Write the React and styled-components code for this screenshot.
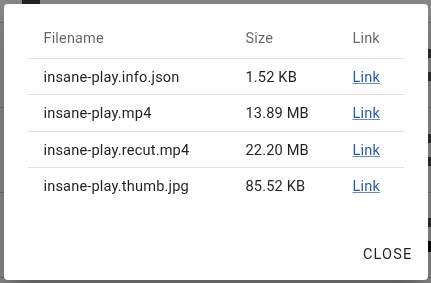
import React from "react";
import styled, { createGlobalStyle } from "styled-components";

const files = [
  { name: "insane-play.info.json", size: "1.52 KB" },
  { name: "insane-play.mp4", size: "13.89 MB" },
  { name: "insane-play.recut.mp4", size: "22.20 MB" },
  { name: "insane-play.thumb.jpg", size: "85.52 KB" },
];

const GlobalStyle = createGlobalStyle`
  html, body {
    margin: 0;
    padding: 0;
    background: #ffffff;
  }
  body {
    font-family: Roboto, "Liberation Sans", Arial, sans-serif;
    -webkit-font-smoothing: antialiased;
  }
`;

const App = () => {
  return (
    <>
      <GlobalStyle />
      <Page aria-hidden="true">
        <TopBar>
          <TabMark />
        </TopBar>
        <PageRow>
          <EdgeMark />
          <EdgeMark />
        </PageRow>
        <PageRow>
          <EdgeMark />
          <EdgeMark />
        </PageRow>
        <PageRow>
          <EdgeMark />
          <EdgeMark dark />
        </PageRow>
      </Page>
      <Backdrop>
        <Dialog role="dialog">
          <DialogContent>
            <Table>
              <colgroup>
                <col style={{ width: 202 }} />
                <col style={{ width: 107 }} />
                <col style={{ width: 67 }} />
              </colgroup>
              <thead>
                <tr>
                  <HeadCell>Filename</HeadCell>
                  <HeadCell>Size</HeadCell>
                  <HeadCell>Link</HeadCell>
                </tr>
              </thead>
              <tbody>
                {files.map((file, i) => (
                  <tr key={file.name}>
                    <BodyCell last={i === files.length - 1}>{file.name}</BodyCell>
                    <BodyCell last={i === files.length - 1}>{file.size}</BodyCell>
                    <BodyCell last={i === files.length - 1}>
                      <FileLink href="#">Link</FileLink>
                    </BodyCell>
                  </tr>
                ))}
              </tbody>
            </Table>
          </DialogContent>
          <DialogActions>
            <TextButton type="button">Close</TextButton>
          </DialogActions>
        </Dialog>
      </Backdrop>
    </>
  );
};

export default App;

const Page = styled.div`
  width: 431px;
  height: 283px;
  overflow: hidden;
  display: flex;
  flex-direction: column;
`;

const TopBar = styled.div`
  height: 22px;
  border-bottom: 1px solid #d0d0d0;
  padding-left: 22px;
`;

const TabMark = styled.div`
  width: 18px;
  height: 4px;
  background: #444;
`;

const PageRow = styled.div`
  height: 84px;
  border-bottom: 1px solid #d0d0d0;
  display: flex;
  flex-direction: column;
  align-items: flex-end;
  justify-content: center;
  gap: 14px;
`;

const EdgeMark = styled.span`
  width: 3px;
  height: ${(p) => (p.dark ? "11px" : "9px")};
  background: ${(p) => (p.dark ? "#111" : "#555")};
`;

const Backdrop = styled.div`
  position: fixed;
  inset: 0;
  background: rgba(0, 0, 0, 0.45);
  display: flex;
  align-items: center;
  justify-content: center;
`;

const Dialog = styled.div`
  width: 424px;
  height: 276px;
  background: #ffffff;
  border-radius: 4px;
  box-shadow: 0 11px 15px -7px rgba(0, 0, 0, 0.2),
    0 24px 38px 3px rgba(0, 0, 0, 0.14), 0 9px 46px 8px rgba(0, 0, 0, 0.12);
  display: flex;
  flex-direction: column;
  box-sizing: border-box;
`;

const DialogContent = styled.div`
  flex: 1;
  padding: 18px 24px 0;
`;

const Table = styled.table`
  width: 376px;
  border-collapse: collapse;
  table-layout: fixed;
`;

const HeadCell = styled.th`
  text-align: left;
  font-weight: 400;
  font-size: 14.5px;
  line-height: 24px;
  letter-spacing: 0.01071em;
  color: rgba(0, 0, 0, 0.6);
  padding: 5px 16px 7px;
  border-bottom: 1px solid #e0e0e0;
  white-space: nowrap;
`;

const BodyCell = styled.td`
  font-size: 14.6px;
  line-height: 24px;
  letter-spacing: 0.01071em;
  color: rgba(0, 0, 0, 0.87);
  padding: 6px 16px 5.5px;
  border-bottom: ${(p) => (p.last ? "none" : "1px solid #e0e0e0")};
  white-space: nowrap;
`;

const FileLink = styled.a`
  color: #2a5ca8;
  text-decoration: underline;
  text-decoration-color: rgba(42, 92, 168, 0.7);
`;

const DialogActions = styled.div`
  display: flex;
  justify-content: flex-end;
  padding: 8px;
`;

const TextButton = styled.button`
  border: none;
  background: transparent;
  font-family: Roboto, "Liberation Sans", Arial, sans-serif;
  font-size: 14.5px;
  font-weight: 400;
  line-height: 24.5px;
  letter-spacing: 1.2px;
  text-transform: uppercase;
  color: rgba(0, 0, 0, 0.87);
  padding: 8px 7px 4px 8px;
  min-width: 64px;
  border-radius: 4px;
  cursor: pointer;
`;
